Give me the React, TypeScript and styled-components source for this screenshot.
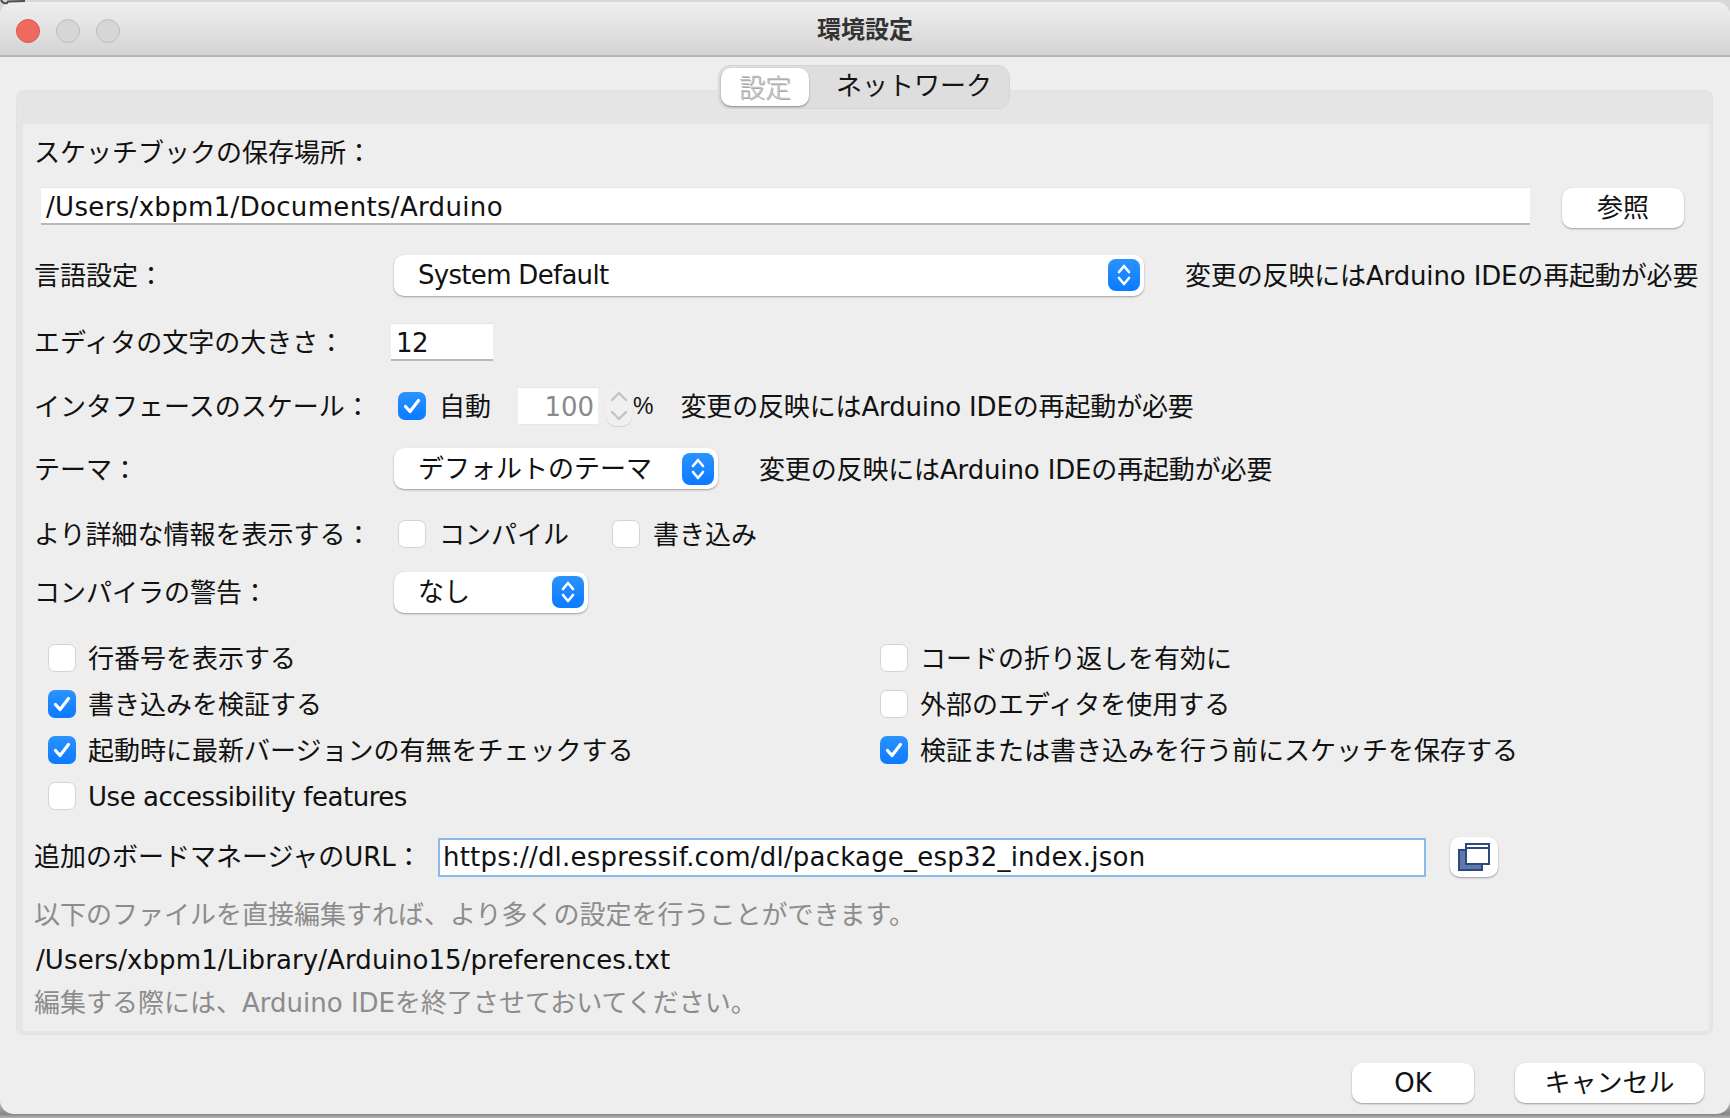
import React from 'react';
import styled, { createGlobalStyle } from 'styled-components';

const UI_FONT = `'DejaVu Sans', 'Noto Sans CJK JP', sans-serif`;

const GlobalStyle = createGlobalStyle`
  html, body {
    margin: 0;
    padding: 0;
    background: #d9d9d9;
  }
  #root {
    width: 1730px;
    height: 1118px;
    overflow: hidden;
  }
`;

const Desktop = styled.div`
  position: relative;
  width: 1730px;
  height: 1118px;
  padding-top: 2px;
  box-sizing: border-box;
  background: linear-gradient(180deg, #d8d8d8 0, #c8c8c8 1100px, #868686 1114px, #b4b4b4 1118px);
  font-family: ${UI_FONT};
  font-size: 26px;
  line-height: 30px;
  color: #111;
`;

const CornerMark = styled.svg`
  position: absolute;
  left: 0;
  top: 0;
`;

const Window = styled.div`
  position: relative;
  width: 1730px;
  height: 1112px;
  display: flex;
  flex-direction: column;
  background: #eeeeee;
  border-radius: 14px;
  overflow: hidden;
`;

const TitleBar = styled.div`
  flex: none;
  height: 55px;
  box-sizing: border-box;
  padding-left: 16px;
  display: flex;
  align-items: center;
  gap: 16px;
  position: relative;
  background: linear-gradient(180deg, #efefef 0%, #e6e6e6 35%, #d4d4d4 100%);
  border-bottom: 2px solid #b5b5b5;
`;

const Light = styled.span<{ $active?: boolean }>`
  width: 24px;
  height: 24px;
  box-sizing: border-box;
  margin-top: 5px;
  border-radius: 50%;
  background: ${(props) => (props.$active ? '#ee6a5f' : '#d6d6d6')};
  border: 1px solid ${(props) => (props.$active ? '#d9584e' : '#bdbdbd')};
`;

const WindowTitle = styled.div`
  position: absolute;
  left: 0;
  right: 0;
  top: 10px;
  text-align: center;
  font-family: 'Noto Sans CJK JP', sans-serif;
  font-size: 24px;
  font-weight: 700;
  line-height: 32px;
  color: #333;
`;

const Tabs = styled.div`
  position: absolute;
  left: 718px;
  top: 63px;
  width: 292px;
  height: 44px;
  box-sizing: border-box;
  padding: 2px;
  display: flex;
  background: #dedede;
  border: 1px solid #d6d6d6;
  border-radius: 12px;
  z-index: 2;
`;

const Tab = styled.div<{ $active?: boolean }>`
  width: ${(props) => (props.$active ? '88px' : 'auto')};
  flex: ${(props) => (props.$active ? 'none' : '1')};
  box-sizing: border-box;
  padding: ${(props) => (props.$active ? '0 0 2px' : '0 0 6px 12px')};
  display: flex;
  align-items: center;
  justify-content: center;
  font-family: 'Noto Sans CJK JP', sans-serif;
  font-size: 26px;
  font-weight: ${(props) => (props.$active ? 300 : 400)};
  line-height: 38px;
  border-radius: 10px;
  background: ${(props) => (props.$active ? '#fff' : 'transparent')};
  color: ${(props) => (props.$active ? '#c4c4c4' : '#151515')};
  box-shadow: ${(props) => (props.$active ? '0 1px 2px rgba(0,0,0,.4)' : 'none')};
  text-shadow: ${(props) => (props.$active ? '1px 1px 0 #a8a8a8' : 'none')};
`;

const Panel = styled.div`
  margin: 33px 17px 0 16px;
  height: 945px;
  box-sizing: border-box;
  padding: 0 3px 3px 6px;
  display: flex;
  flex-direction: column;
  background: #e5e5e5;
  border: 1px solid #e2e2e2;
  border-radius: 8px;
`;

const PanelHead = styled.div`
  flex: none;
  height: 33px;
`;

const Form = styled.div`
  flex: 1;
  box-sizing: border-box;
  padding: 10px 10px 0 11px;
  background: #eeeeee;
`;

const Row = styled.div<{ $h: number; $mb?: number }>`
  height: ${(props) => props.$h}px;
  margin-bottom: ${(props) => props.$mb ?? 0}px;
  display: flex;
  align-items: center;
  white-space: nowrap;
`;

const PathRow = styled(Row)`
  padding: 0 15px 0 7px;
  gap: 32px;
`;

// text sits a little under the centre of its row, as in the native dialog
const Caption = styled.span`
  padding-top: 2px;
`;

const Label = styled.div<{ $flush?: boolean }>`
  flex: none;
  width: 357px;
  padding-top: ${(props) => (props.$flush ? 0 : 2)}px;
`;

const PathLine = styled.div`
  padding-left: 2px;
`;

const Controls = styled.div<{ $inset?: number }>`
  display: flex;
  align-items: center;
  padding-left: ${(props) => props.$inset ?? 0}px;
`;

const Track = styled.span<{ $ls: number }>`
  letter-spacing: ${(props) => props.$ls}px;
`;

const TextField = styled.div<{ $width?: number; $muted?: boolean; $right?: boolean }>`
  flex: ${(props) => (props.$width ? 'none' : '1')};
  width: ${(props) => (props.$width ? `${props.$width}px` : 'auto')};
  height: 38px;
  box-sizing: border-box;
  padding: 2px ${(props) => (props.$right ? 4 : 5)}px 0;
  display: flex;
  align-items: center;
  justify-content: ${(props) => (props.$right ? 'flex-end' : 'flex-start')};
  background: #fff;
  color: ${(props) => (props.$muted ? '#8a8a8a' : '#111')};
  border-top: 1px solid #e4e4e4;
  border-bottom: ${(props) => (props.$muted ? '1px solid #e8e8e8' : '2px solid #b9b9b9')};
`;

const UrlField = styled.div`
  flex: none;
  width: 988px;
  height: 39px;
  box-sizing: border-box;
  padding: 0 3px;
  display: flex;
  align-items: center;
  background: #fff;
  border: 2px solid #8ab9ec;
`;

const PushButton = styled.div<{ $width: number }>`
  flex: none;
  width: ${(props) => props.$width}px;
  height: 40px;
  display: flex;
  align-items: center;
  justify-content: center;
  background: #fff;
  border-radius: 10px;
  box-shadow: 0 1px 2px rgba(0, 0, 0, 0.35);
`;

const BrowseButton = styled(PushButton)`
  margin-top: 3px;
`;

const IconButton = styled(PushButton)`
  margin-left: 24px;
`;

const SelectBox = styled.div<{ $width: number }>`
  flex: none;
  width: ${(props) => props.$width}px;
  height: 41px;
  box-sizing: border-box;
  padding: 0 4px 0 24px;
  display: flex;
  align-items: center;
  justify-content: space-between;
  background: #fff;
  border-radius: 10px;
  box-shadow: 0 1px 2px rgba(0, 0, 0, 0.35);
`;

const Stepper = styled.span`
  flex: none;
  width: 32px;
  height: 32px;
  display: flex;
  align-items: center;
  justify-content: center;
  border-radius: 8px;
  background: linear-gradient(180deg, #2b93ff, #0a7aff);
`;

const Note = styled(Caption)<{ $gap: number }>`
  margin-left: ${(props) => props.$gap}px;
  letter-spacing: -0.15px;
`;

const Percent = styled.span`
  font-family: 'Liberation Sans', sans-serif;
  font-size: 23px;
`;

const Box = styled.span<{ $checked?: boolean }>`
  flex: none;
  width: 28px;
  height: 28px;
  box-sizing: border-box;
  display: flex;
  align-items: center;
  justify-content: center;
  border-radius: 7px;
  background: ${(props) => (props.$checked ? 'linear-gradient(180deg, #2b93ff, #0a7aff)' : '#fff')};
  border: ${(props) => (props.$checked ? 'none' : '1px solid #d4d4d4')};
`;

const CheckItem = styled.div<{ $after?: number; $gap?: number }>`
  display: flex;
  align-items: center;
  gap: ${(props) => props.$gap ?? 13}px;
  margin-right: ${(props) => props.$after ?? 0}px;
`;

const OptionGrid = styled.div`
  margin: 0 0 0 14px;
  display: grid;
  grid-template-columns: 832px 1fr;
  grid-auto-rows: 46px;
  align-items: center;
  white-space: nowrap;
`;

const Spinner = styled.span`
  flex: none;
  width: 26px;
  height: 40px;
  margin: 0 1px 0 8px;
  display: flex;
  flex-direction: column;
  align-items: center;
  justify-content: space-around;
  background: #f0f0f0;
  border-radius: 10px;
  box-shadow: 0 1px 1px rgba(0, 0, 0, 0.12);
`;

const Hint = styled.div`
  padding-top: 2px;
  color: #8c8c8c;
`;

const Footer = styled.div`
  margin-top: 28px;
  padding-right: 26px;
  display: flex;
  justify-content: flex-end;
  gap: 41px;
  white-space: nowrap;
`;

const Check = () => (
  <svg width="20" height="18" viewBox="0 0 20 18">
    <path d="M3.5 9.5 L8 14.5 L16.5 3.5" fill="none" stroke="#fff" strokeWidth="3.2" strokeLinecap="round" strokeLinejoin="round" />
  </svg>
);

const Updown = () => (
  <svg width="16" height="26" viewBox="0 0 16 26">
    <path d="M3 10 L8 4 L13 10 M3 16 L8 22 L13 16" fill="none" stroke="#fff" strokeWidth="2.6" strokeLinecap="round" strokeLinejoin="round" />
  </svg>
);

const Chevron = ({ up }: { up?: boolean }) => (
  <svg width="18" height="10" viewBox="0 0 18 10">
    <path d={up ? 'M2 9 L9 2 L16 9' : 'M2 1 L9 8 L16 1'} fill="none" stroke="#c4c4c4" strokeWidth="2.4" strokeLinecap="round" strokeLinejoin="round" />
  </svg>
);

const WindowsIcon = () => (
  <svg width="32" height="28" viewBox="0 0 32 28">
    <rect x="1" y="7" width="23" height="20" fill="#5f7aa8" stroke="#2b4a80" strokeWidth="2" />
    <rect x="8" y="1" width="23" height="20" fill="#fff" stroke="#2b4a80" strokeWidth="2" />
    <line x1="8" y1="5" x2="31" y2="5" stroke="#2b4a80" strokeWidth="2" />
  </svg>
);

const Option = ({ checked, children }: { checked?: boolean; children: React.ReactNode }) => (
  <CheckItem $gap={12}>
    <Box $checked={checked}>{checked && <Check />}</Box>
    <Caption>{children}</Caption>
  </CheckItem>
);

const RESTART_NOTE = '変更の反映にはArduino IDEの再起動が必要';

export default function App() {
  return (
    <Desktop>
      <GlobalStyle />
      <Window>
        <TitleBar>
          <Light $active />
          <Light />
          <Light />
          <WindowTitle>環境設定</WindowTitle>
        </TitleBar>
        <Tabs>
          <Tab $active>設定</Tab>
          <Tab>ネットワーク</Tab>
        </Tabs>
        <Panel>
          <PanelHead />
          <Form>
            <Row $h={36}><Caption>スケッチブックの保存場所：</Caption></Row>
            <PathRow $h={72}>
              <TextField><Track $ls={0.33}>/Users/xbpm1/Documents/Arduino</Track></TextField>
              <BrowseButton $width={122}>参照</BrowseButton>
            </PathRow>
            <Row $h={66}>
              <Label>言語設定：</Label>
              <Controls $inset={3}>
                <SelectBox $width={750}>
                  <Track $ls={-0.7}>System Default</Track>
                  <Stepper><Updown /></Stepper>
                </SelectBox>
                <Note $gap={41}>{RESTART_NOTE}</Note>
              </Controls>
            </Row>
            <Row $h={68}>
              <Label>エディタの文字の大きさ：</Label>
              <Controls>
                <TextField $width={102}><Track $ls={-0.5}>12</Track></TextField>
              </Controls>
            </Row>
            <Row $h={60}>
              <Label>インタフェースのスケール：</Label>
              <Controls $inset={7}>
                <CheckItem $after={27}>
                  <Box $checked><Check /></Box>
                  <Caption>自動</Caption>
                </CheckItem>
                <TextField $width={80} $muted $right>100</TextField>
                <Spinner>
                  <Chevron up />
                  <Chevron />
                </Spinner>
                <Percent>%</Percent>
                <Note $gap={27}>{RESTART_NOTE}</Note>
              </Controls>
            </Row>
            <Row $h={65}>
              <Label>テーマ：</Label>
              <Controls $inset={3}>
                <SelectBox $width={324}>
                  デフォルトのテーマ
                  <Stepper><Updown /></Stepper>
                </SelectBox>
                <Note $gap={41}>{RESTART_NOTE}</Note>
              </Controls>
            </Row>
            <Row $h={65}>
              <Label>より詳細な情報を表示する：</Label>
              <Controls $inset={7}>
                <CheckItem $after={43}>
                  <Box />
                  <Caption>コンパイル</Caption>
                </CheckItem>
                <CheckItem>
                  <Box />
                  <Caption>書き込み</Caption>
                </CheckItem>
              </Controls>
            </Row>
            <Row $h={52} $mb={17}>
              <Label>コンパイラの警告：</Label>
              <Controls $inset={3}>
                <SelectBox $width={194}>
                  なし
                  <Stepper><Updown /></Stepper>
                </SelectBox>
              </Controls>
            </Row>
            <OptionGrid>
              <Option>行番号を表示する</Option>
              <Option>コードの折り返しを有効に</Option>
              <Option checked>書き込みを検証する</Option>
              <Option>外部のエディタを使用する</Option>
              <Option checked>起動時に最新バージョンの有無をチェックする</Option>
              <Option checked>検証または書き込みを行う前にスケッチを保存する</Option>
              <Option><Track $ls={-0.47}>Use accessibility features</Track></Option>
            </OptionGrid>
            <Row $h={76}>
              <Label $flush>追加のボードマネージャのURL：</Label>
              <Controls $inset={47}>
                <UrlField><Track $ls={0.21}>https://dl.espressif.com/dl/package_esp32_index.json</Track></UrlField>
                <IconButton $width={48}><WindowsIcon /></IconButton>
              </Controls>
            </Row>
            <Row $h={38}><Hint>以下のファイルを直接編集すれば、より多くの設定を行うことができます。</Hint></Row>
            <Row $h={54}><PathLine><Track $ls={0.1}>/Users/xbpm1/Library/Arduino15/preferences.txt</Track></PathLine></Row>
            <Row $h={30}><Hint>編集する際には、Arduino IDEを終了させておいてください。</Hint></Row>
          </Form>
        </Panel>
        <Footer>
          <PushButton $width={122}>OK</PushButton>
          <PushButton $width={189}>キャンセル</PushButton>
        </Footer>
      </Window>
      <CornerMark width="26" height="6" viewBox="0 0 26 6">
        <path d="M1 0 Q3 4 7 3 L8 1.5 L25 1" fill="none" stroke="#4a5058" strokeWidth="2" />
      </CornerMark>
    </Desktop>
  );
}
